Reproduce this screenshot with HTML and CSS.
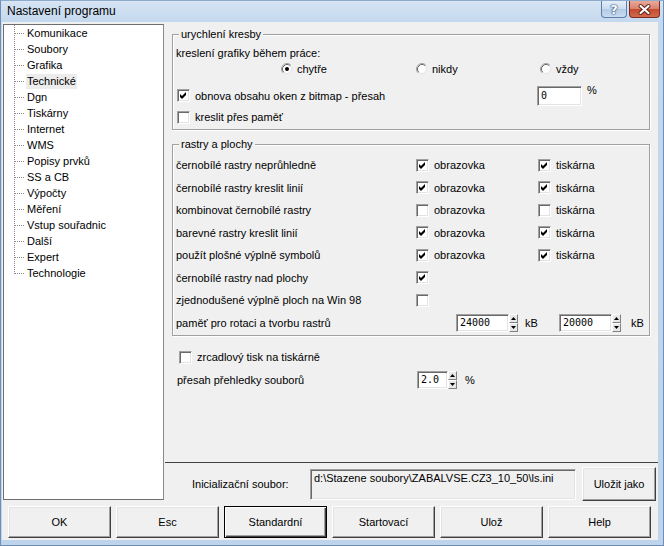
FILE: index.html
```html
<!DOCTYPE html>
<html lang="cs">
<head>
<meta charset="utf-8">
<title>Nastavení programu</title>
<link rel="stylesheet" href="styles.css">
</head>
<body>
<div class="window">
  <div class="titlebar">
    <span class="title">Nastavení programu</span>
    <div class="caption-btns">
      <span class="cap-btn help">?</span>
      <span class="cap-btn close"><svg width="29" height="15" viewBox="0 0 29 15"><path d="M10.5 4 L18.5 11 M18.5 4 L10.5 11" stroke="#5a1c14" stroke-width="4" stroke-linecap="round"/><path d="M10.5 4 L18.5 11 M18.5 4 L10.5 11" stroke="#fff" stroke-width="2.2" stroke-linecap="round"/></svg></span>
    </div>
  </div>
  <div class="client">
    <div class="main">
      <ul class="tree">
        <li>Komunikace</li>
        <li>Soubory</li>
        <li>Grafika</li>
        <li><span class="sel">Technické</span></li>
        <li>Dgn</li>
        <li>Tiskárny</li>
        <li>Internet</li>
        <li>WMS</li>
        <li>Popisy prvků</li>
        <li>SS a CB</li>
        <li>Výpočty</li>
        <li>Měření</li>
        <li>Vstup souřadnic</li>
        <li>Další</li>
        <li>Expert</li>
        <li>Technologie</li>
      </ul>
      <div class="right">
        <div class="panel">
          <div class="group g1">
            <div class="group-title">urychlení kresby</div>
            <div class="r-label">kreslení grafiky během práce:</div>
            <div class="r-radio">
              <span class="opt w-chytre"><svg class="rb" width="12" height="12" viewBox="0 0 12 12"><circle cx="6" cy="6" r="4.5" fill="#fff"/><path d="M2.11 9.89 A5.5 5.5 0 0 1 9.89 2.11" fill="none" stroke="#a0a0a0"/><path d="M2.82 9.18 A4.5 4.5 0 0 1 9.18 2.82" fill="none" stroke="#696969"/><path d="M9.18 2.82 A4.5 4.5 0 0 1 2.82 9.18" fill="none" stroke="#e3e3e3"/><circle cx="6" cy="6" r="2" fill="#000"/></svg>chytře</span>
              <span class="opt w-nikdy"><svg class="rb" width="12" height="12" viewBox="0 0 12 12"><circle cx="6" cy="6" r="4.5" fill="#fff"/><path d="M2.11 9.89 A5.5 5.5 0 0 1 9.89 2.11" fill="none" stroke="#a0a0a0"/><path d="M2.82 9.18 A4.5 4.5 0 0 1 9.18 2.82" fill="none" stroke="#696969"/><path d="M9.18 2.82 A4.5 4.5 0 0 1 2.82 9.18" fill="none" stroke="#e3e3e3"/></svg>nikdy</span>
              <span class="opt"><svg class="rb" width="12" height="12" viewBox="0 0 12 12"><circle cx="6" cy="6" r="4.5" fill="#fff"/><path d="M2.11 9.89 A5.5 5.5 0 0 1 9.89 2.11" fill="none" stroke="#a0a0a0"/><path d="M2.82 9.18 A4.5 4.5 0 0 1 9.18 2.82" fill="none" stroke="#696969"/><path d="M9.18 2.82 A4.5 4.5 0 0 1 2.82 9.18" fill="none" stroke="#e3e3e3"/></svg>vždy</span>
            </div>
            <div class="r-obnova">
              <span class="opt w-obnova"><span class="cb"><svg width="11" height="11" viewBox="0 0 11 11"><path d="M2 4 L4 6 L8 2 L8 5 L4 9 L2 7 Z"/></svg></span>obnova obsahu oken z bitmap - přesah</span>
              <span class="field num w-zero">0</span>
              <span class="pct-top">%</span>
            </div>
            <div class="r-kreslit">
              <span class="opt"><span class="cb"></span>kreslit přes paměť</span>
            </div>
          </div>

          <div class="group g2">
            <div class="group-title">rastry a plochy</div>
            <div class="rows">
              <div class="grow">
                <span>černobílé rastry neprůhledně</span>
                <span class="opt"><span class="cb"><svg width="11" height="11" viewBox="0 0 11 11"><path d="M2 4 L4 6 L8 2 L8 5 L4 9 L2 7 Z"/></svg></span>obrazovka</span>
                <span class="opt"><span class="cb"><svg width="11" height="11" viewBox="0 0 11 11"><path d="M2 4 L4 6 L8 2 L8 5 L4 9 L2 7 Z"/></svg></span>tiskárna</span>
              </div>
              <div class="grow">
                <span>černobílé rastry kreslit linií</span>
                <span class="opt"><span class="cb"><svg width="11" height="11" viewBox="0 0 11 11"><path d="M2 4 L4 6 L8 2 L8 5 L4 9 L2 7 Z"/></svg></span>obrazovka</span>
                <span class="opt"><span class="cb"><svg width="11" height="11" viewBox="0 0 11 11"><path d="M2 4 L4 6 L8 2 L8 5 L4 9 L2 7 Z"/></svg></span>tiskárna</span>
              </div>
              <div class="grow">
                <span>kombinovat černobílé rastry</span>
                <span class="opt"><span class="cb"></span>obrazovka</span>
                <span class="opt"><span class="cb"></span>tiskárna</span>
              </div>
              <div class="grow">
                <span>barevné rastry kreslit linií</span>
                <span class="opt"><span class="cb"><svg width="11" height="11" viewBox="0 0 11 11"><path d="M2 4 L4 6 L8 2 L8 5 L4 9 L2 7 Z"/></svg></span>obrazovka</span>
                <span class="opt"><span class="cb"><svg width="11" height="11" viewBox="0 0 11 11"><path d="M2 4 L4 6 L8 2 L8 5 L4 9 L2 7 Z"/></svg></span>tiskárna</span>
              </div>
              <div class="grow">
                <span>použít plošné výplně symbolů</span>
                <span class="opt"><span class="cb"><svg width="11" height="11" viewBox="0 0 11 11"><path d="M2 4 L4 6 L8 2 L8 5 L4 9 L2 7 Z"/></svg></span>obrazovka</span>
                <span class="opt"><span class="cb"><svg width="11" height="11" viewBox="0 0 11 11"><path d="M2 4 L4 6 L8 2 L8 5 L4 9 L2 7 Z"/></svg></span>tiskárna</span>
              </div>
              <div class="grow">
                <span>černobílé rastry nad plochy</span>
                <span class="opt"><span class="cb"><svg width="11" height="11" viewBox="0 0 11 11"><path d="M2 4 L4 6 L8 2 L8 5 L4 9 L2 7 Z"/></svg></span></span>
                <span></span>
              </div>
              <div class="grow">
                <span>zjednodušené výplně ploch na Win 98</span>
                <span class="opt"><span class="cb"></span></span>
                <span></span>
              </div>
              <div class="srow">
                <span class="w-mem">paměť pro rotaci a tvorbu rastrů</span>
                <span class="spinner"><span class="field num w-big">24000</span><span class="spin"><span class="sb"><svg width="5" height="3" viewBox="0 0 5 3"><path d="M0 3 L2.5 0 L5 3 Z"/></svg></span><span class="sb"><svg width="5" height="3" viewBox="0 0 5 3"><path d="M0 0 L5 0 L2.5 3 Z"/></svg></span></span></span>
                <span class="kb1">kB</span>
                <span class="spinner"><span class="field num w-big">20000</span><span class="spin"><span class="sb"><svg width="5" height="3" viewBox="0 0 5 3"><path d="M0 3 L2.5 0 L5 3 Z"/></svg></span><span class="sb"><svg width="5" height="3" viewBox="0 0 5 3"><path d="M0 0 L5 0 L2.5 3 Z"/></svg></span></span></span>
                <span class="kb2">kB</span>
              </div>
            </div>
          </div>

          <div class="r-zrcadlo">
            <span class="opt"><span class="cb"></span>zrcadlový tisk na tiskárně</span>
          </div>
          <div class="r-presah">
            <span class="w-presah">přesah přehledky souborů</span>
            <span class="spinner"><span class="field num w-small">2.0</span><span class="spin"><span class="sb"><svg width="5" height="3" viewBox="0 0 5 3"><path d="M0 3 L2.5 0 L5 3 Z"/></svg></span><span class="sb"><svg width="5" height="3" viewBox="0 0 5 3"><path d="M0 0 L5 0 L2.5 3 Z"/></svg></span></span></span>
            <span class="pct">%</span>
          </div>
        </div>
        <div class="inirow">
          <span class="ini-label">Inicializační soubor:</span>
          <span class="field ini-field">d:\Stazene soubory\ZABALVSE.CZ3_10_50\ls.ini</span>
          <span class="btn ini-btn">Uložit jako</span>
        </div>
      </div>
    </div>
    <div class="buttons">
      <span class="btn">OK</span>
      <span class="btn">Esc</span>
      <span class="btn default">Standardní</span>
      <span class="btn">Startovací</span>
      <span class="btn">Ulož</span>
      <span class="btn">Help</span>
    </div>
  </div>
</div>
</body>
</html>
```

FILE: styles.css
```css
* { box-sizing: border-box; }
html, body { margin: 0; padding: 0; }
body {
  width: 664px;
  height: 546px;
  overflow: hidden;
  font-family: "Liberation Sans", Arial, sans-serif;
  font-size: 11px;
  color: #000;
  background: #bcd3ec;
}
.window {
  width: 664px;
  height: 546px;
  display: flex;
  flex-direction: column;
  border: 1px solid #6f8fb6;
  border-top-color: #8fabcc;
  background: linear-gradient(to bottom, #d7e5f4 0px, #c4d8ee 20px, #bed4ec 100%);
}
.titlebar {
  height: 21px;
  display: flex;
  align-items: flex-start;
  padding-left: 6px;
}
.title {
  font-size: 12px;
  line-height: 21px;
  color: #000;
}
.caption-btns {
  margin-left: auto;
  margin-right: 3px;
  display: flex;
  gap: 2px;
}
.cap-btn {
  height: 17px;
  display: flex;
  align-items: center;
  justify-content: center;
  border: 1px solid #5e7fa8;
  border-top: none;
  border-radius: 0 0 4px 4px;
}
.help {
  width: 26px;
  background: linear-gradient(to bottom, #e4eef9 0%, #c9dbef 50%, #b4cbe6 51%, #c8dcf1 100%);
  font: bold 13px "DejaVu Sans", sans-serif;
  color: #fff;
  text-shadow: 0 0 1px #2c4f7c, 0 0 1px #2c4f7c, 0 0 2px #2c4f7c;
}
.close {
  width: 31px;
  border-color: #7d2b22;
  background: linear-gradient(to bottom, #e9a999 0%, #d9806c 50%, #c5492f 51%, #d26a4c 100%);
}
.client {
  margin-left: 1px;
  width: 656px;
  height: 518px;
  background: #f0f0f0;
}
.main {
  display: flex;
  margin-top: 2px;
  height: 477px;
}
.tree {
  margin: 0 0 0 1px;
  padding: 0;
  width: 161px;
  height: 476px;
  list-style: none;
  background: #fff;
  border: 1px solid #6e6e6e;
  border-right-color: #8a8a8a;
}
.tree li {
  height: 16px;
  line-height: 16px;
  padding-left: 23px;
  background-image:
    repeating-linear-gradient(to bottom, #8c8c8c 0 1px, transparent 1px 2px),
    repeating-linear-gradient(to right, #8c8c8c 0 1px, transparent 1px 2px);
  background-repeat: no-repeat;
  background-size: 1px 16px, 10px 1px;
  background-position: 10px 0, 11px 8px;
}
.tree li:last-child { background-size: 1px 9px, 10px 1px; }
.tree .sel { background: #ececec; padding: 1px 1px 2px 1px; margin-left: -1px; }
.right {
  margin-left: 1px;
  width: 493px;
  display: flex;
  flex-direction: column;
}
.panel {
  height: 439px;
  border-bottom: 1px solid #404040;
  padding-top: 10px;
}
.group {
  margin-left: 7px;
  width: 478px;
  border: 1px solid #a0a0a0;
  box-shadow: inset 1px 1px 0 #fff, 1px 1px 0 #fff;
}
.group-title {
  width: fit-content;
  margin: -7px 0 0 6px;
  padding: 0 2px;
  height: 13px;
  line-height: 13px;
  background: #f0f0f0;
}
.g1 { height: 96px; }
.r-label {
  margin-top: 4px;
  height: 16px;
  line-height: 16px;
  padding-left: 3px;
}
.r-radio {
  height: 16px;
  display: flex;
  align-items: center;
  padding-left: 108px;
}
.opt {
  display: flex;
  align-items: center;
  white-space: nowrap;
}
.rb { margin-right: 4px; flex: none; }
.w-chytre { width: 135px; }
.w-nikdy { width: 124px; }
.r-obnova {
  margin-top: 8px;
  height: 21px;
  display: flex;
  align-items: center;
  padding-left: 4px;
}
.w-obnova { width: 360px; }
.cb {
  flex: none;
  width: 13px;
  height: 13px;
  margin-right: 5px;
  background: #fff;
  border: 1px solid;
  border-color: #a0a0a0 #fff #fff #a0a0a0;
  box-shadow: inset 1px 1px 0 #696969, inset -1px -1px 0 #e3e3e3;
  display: flex;
}
.cb svg { fill: #000; }
.field {
  background: #fff;
  border: 1px solid;
  border-color: #a0a0a0 #fff #fff #a0a0a0;
  box-shadow: inset 1px 1px 0 #696969, inset -1px -1px 0 #e3e3e3;
}
.num {
  font-family: "DejaVu Sans Mono", "Liberation Mono", monospace;
  font-size: 10px;
  padding-left: 3px;
  display: flex;
  align-items: center;
}
.w-zero { width: 45px; height: 20px; }
.pct-top { align-self: flex-start; margin-left: 5px; margin-top: -1px; }
.r-kreslit {
  margin-top: 3px;
  height: 16px;
  display: flex;
  align-items: center;
  padding-left: 4px;
}
.g2 { margin-top: 14px; height: 192px; }
.rows { margin-top: 3px; }
.grow {
  height: 22.5px;
  display: grid;
  grid-template-columns: 240px 122px auto;
  align-items: center;
  padding-left: 3px;
}
.srow {
  height: 22.5px;
  display: flex;
  align-items: center;
  padding-left: 3px;
}
.w-mem { width: 280px; }
.spinner { display: flex; height: 18px; }
.w-big { width: 53px; height: 18px; }
.w-small { width: 31px; height: 18px; }
.spin {
  width: 9px;
  height: 18px;
  display: flex;
  flex-direction: column;
}
.sb {
  height: 9px;
  background: #e8e8e8;
  border: 1px solid;
  border-color: #fff #808080 #808080 #fff;
  display: flex;
  align-items: center;
  justify-content: center;
}
.sb svg { fill: #000; }
.kb1 { width: 41px; padding-left: 7px; }
.kb2 { padding-left: 10px; }
.r-zrcadlo {
  margin-top: 13px;
  height: 16px;
  display: flex;
  align-items: center;
  padding-left: 14px;
}
.r-presah {
  margin-top: 5px;
  height: 19px;
  display: flex;
  align-items: center;
  padding-left: 12px;
}
.w-presah { width: 240px; }
.pct { margin-left: 8px; }
.inirow {
  margin-top: 4px;
  height: 34px;
  display: flex;
  align-items: center;
  padding-left: 27px;
}
.ini-label { width: 118px; }
.ini-field {
  width: 266px;
  height: 31px;
  background: #f0f0f0;
  padding: 2px 0 0 3px;
  white-space: nowrap;
  overflow: hidden;
}
.btn {
  display: flex;
  align-items: center;
  justify-content: center;
  background: #f0f0f0;
  border: 1px solid;
  border-color: #fff #404040 #404040 #fff;
  box-shadow: inset -1px -1px 0 #a0a0a0, inset 1px 1px 0 #e3e3e3;
  white-space: nowrap;
}
.ini-btn { margin-left: 6px; width: 74px; height: 34px; }
.buttons {
  margin-top: 5px;
  padding-left: 6px;
  display: flex;
  gap: 5px;
}
.buttons .btn { width: 103px; height: 32px; }
.buttons .default {
  border-color: #000;
  box-shadow: inset 1px 1px 0 #fff, inset -1px -1px 0 #404040, inset -2px -2px 0 #a0a0a0;
}
```
